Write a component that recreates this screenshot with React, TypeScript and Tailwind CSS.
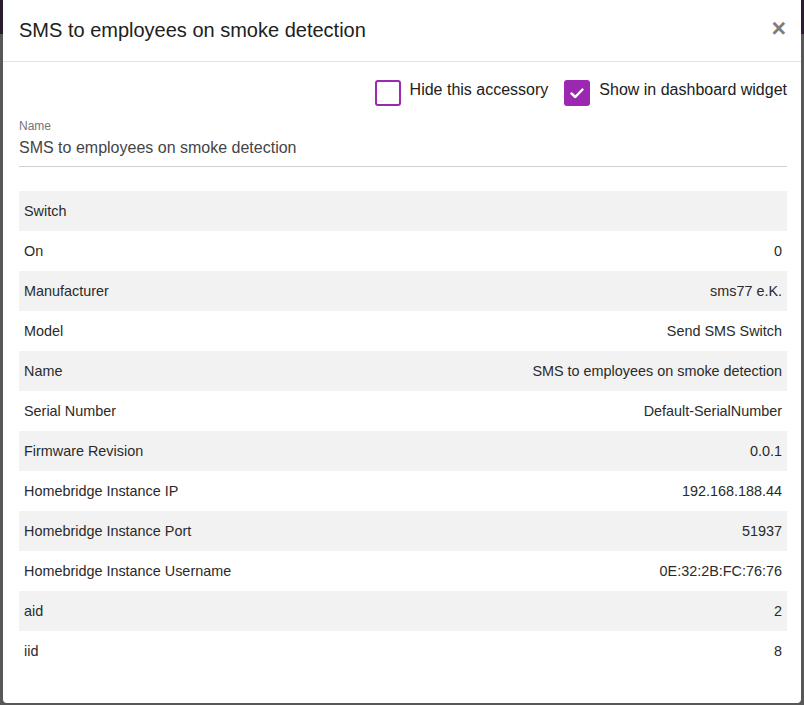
import React from "react";

const rows: [string, string][] = [
  ["Switch", ""],
  ["On", "0"],
  ["Manufacturer", "sms77 e.K."],
  ["Model", "Send SMS Switch"],
  ["Name", "SMS to employees on smoke detection"],
  ["Serial Number", "Default-SerialNumber"],
  ["Firmware Revision", "0.0.1"],
  ["Homebridge Instance IP", "192.168.188.44"],
  ["Homebridge Instance Port", "51937"],
  ["Homebridge Instance Username", "0E:32:2B:FC:76:76"],
  ["aid", "2"],
  ["iid", "8"],
];

export default function App() {
  return (
    <div
      className="w-[804px] h-[705px] overflow-hidden bg-[linear-gradient(to_bottom,#2a1b30_0px,#2a1b30_34px,#585858_34px)] px-[3px]"
      style={{ fontFamily: '"Liberation Sans", Arial, sans-serif' }}
    >
      <div className="w-[798px] h-[703px] bg-white rounded-b-[4px] flex flex-col">
        <div className="h-[62px] flex items-center justify-between pl-[16px] pr-[15px] border-b border-[#e3e3e3]">
          <div className="text-[20px] text-[#212121] leading-none -mt-[2px]">SMS to employees on smoke detection</div>
          <div className="text-[25px] font-bold text-[#7f7f7f] leading-none -mt-[4px]">×</div>
        </div>
        <div className="pl-[16px] pr-[14px]">
          <div className="flex justify-end items-center mt-[18px] h-[26px] text-[16px] text-[#212121]">
            <div className="flex items-center">
              <div className="w-[26px] h-[26px] rounded-[3px] border-2 border-[#9c27b0] bg-white" />
              <span className="ml-[9px] mb-[6px]">Hide this accessory</span>
            </div>
            <div className="flex items-center ml-[16px]">
              <div className="w-[26px] h-[26px] rounded-[3px] bg-[#9c27b0] flex items-center justify-center">
                <svg width="16" height="16" viewBox="0 0 16 16">
                  <path d="M2.5 8.5 L6.3 12 L13.5 4.5" fill="none" stroke="white" strokeWidth="2.4" strokeLinecap="round" strokeLinejoin="round" />
                </svg>
              </div>
              <span className="ml-[9px] mb-[6px]">Show in dashboard widget</span>
            </div>
          </div>
          <div className="mt-[13px] border-b border-[#cfcfd4] pb-[8px]">
            <div className="text-[12px] leading-[14px] text-[#757575]">Name</div>
            <div className="text-[16px] leading-[20px] text-[#454545] mt-[5px]">SMS to employees on smoke detection</div>
          </div>
          <div className="mt-[24px] text-[14.4px] text-[#2a2a2a]">
            {rows.map(([k, v], i) => (
              <div
                key={k + i}
                className={`h-[40px] flex items-center justify-between px-[5px] pt-[2px] ${i % 2 === 0 ? "bg-[#f2f2f2]" : "bg-white"}`}
              >
                <span>{k}</span>
                <span>{v}</span>
              </div>
            ))}
          </div>
        </div>
      </div>
    </div>
  );
}
